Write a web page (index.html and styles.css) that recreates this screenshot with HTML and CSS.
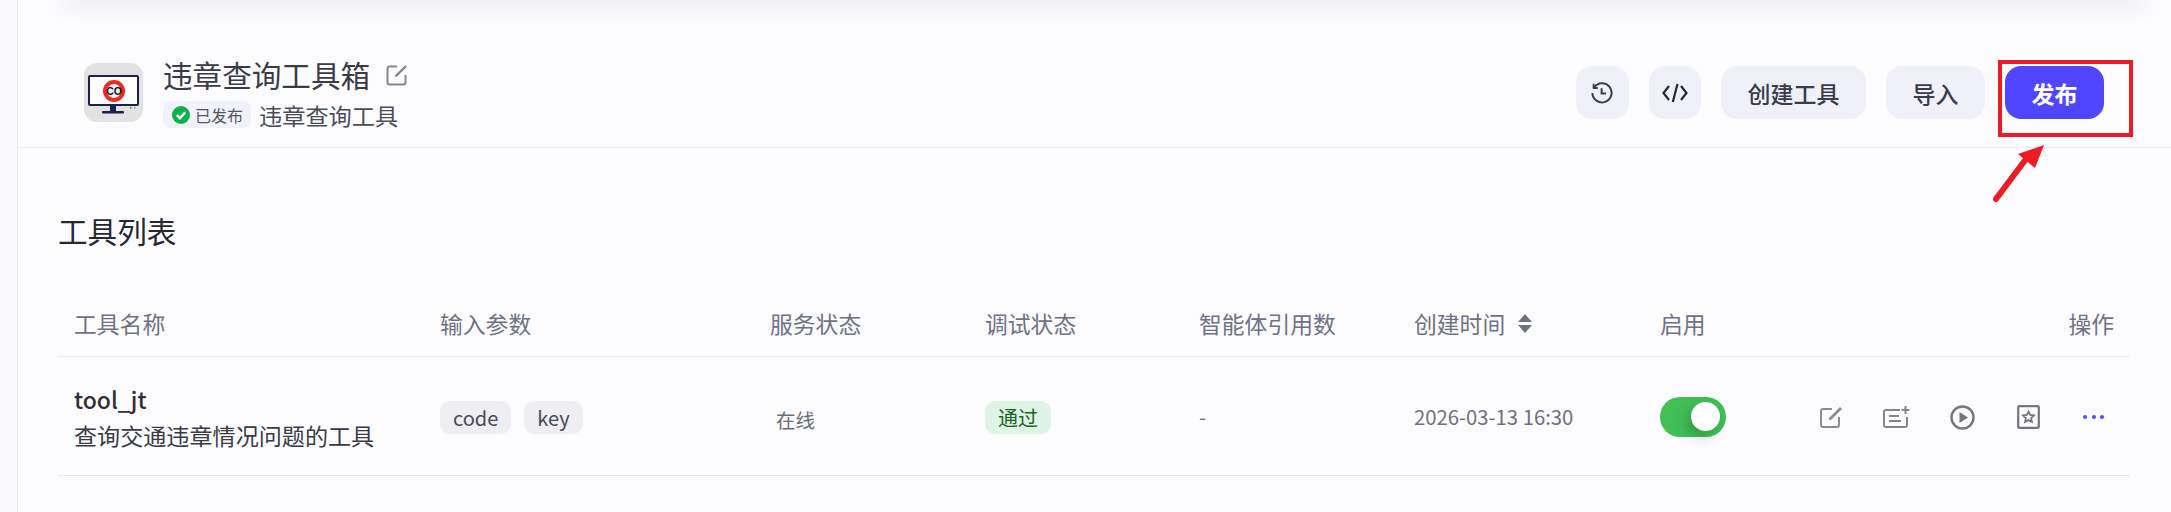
FILE: index.html
```html
<!DOCTYPE html>
<html lang="zh-CN">
<head>
  <meta charset="UTF-8" />
  <title>违章查询工具箱</title>
  <link rel="stylesheet" href="styles.css">
</head>
<body>
  <div class="app">
    <div class="side-edge"></div>
    <div class="main">
      <div class="top-card"></div>

      <div class="header">
        <div class="logo">
          <svg width="59" height="59" viewBox="0 0 59 59">
            <rect x="5" y="13" width="49" height="29" rx="1" fill="#fff" stroke="#1b2050" stroke-width="2"/>
            <rect x="26" y="42" width="6" height="6" fill="#1b2050"/>
            <rect x="18" y="48" width="22" height="2.4" rx="1" fill="#1b2050"/>
            <circle cx="30" cy="28" r="9" fill="#f4f4f4" stroke="#f0281e" stroke-width="4"/>
            <text x="30" y="32" class="logo-text" text-anchor="middle">CO</text>
            <rect x="46" y="44" width="1.4" height="1.4" fill="#555"/>
            <rect x="50" y="44" width="1.4" height="1.4" fill="#888"/>
          </svg>
        </div>
        <div class="info">
          <div class="title-row">
            <span class="title">违章查询工具箱</span>
            <svg class="title-edit" width="22" height="22" viewBox="0 0 22 22" fill="none" stroke="#85858c" stroke-width="2">
              <path d="M11 2.5H3.5a2 2 0 0 0-2 2v14a2 2 0 0 0 2 2h14a2 2 0 0 0 2-2V11"/>
              <path d="M9.5 12.5 20 2" stroke-width="2.4"/>
            </svg>
          </div>
          <div class="sub-row">
            <span class="badge">
              <svg width="18" height="18" viewBox="0 0 18 18">
                <circle cx="9" cy="9" r="9" fill="#0bb04a"/>
                <path d="M4.8 9.2 7.8 12.2 13.2 6.4" fill="none" stroke="#fff" stroke-width="2.4"/>
              </svg>
              已发布
            </span>
            <span class="sub-text">违章查询工具</span>
          </div>
        </div>
        <div class="actions">
          <button class="btn btn-icon">
            <svg width="22" height="22" viewBox="0 0 22 22" fill="none" stroke="#3a3d52" stroke-width="2">
              <path d="M3.2 5.2A9.6 9.6 0 1 1 1.4 11"/>
              <path d="M2.6 1.8V6h4.2" stroke-width="1.8"/>
              <path d="M10.6 6.2v5.2h4.4"/>
            </svg>
          </button>
          <button class="btn btn-icon">
            <svg width="26" height="20" viewBox="0 0 26 20" fill="none" stroke="#26283a" stroke-width="2.2">
              <path d="M7 3 1.5 10 7 17"/>
              <path d="M19 3 24.5 10 19 17"/>
              <path d="M15.5 1 10.8 19"/>
            </svg>
          </button>
          <button class="btn btn-wide">创建工具</button>
          <button class="btn btn-mid">导入</button>
          <button class="btn btn-mid btn-primary">发布</button>
        </div>
      </div>

      <div class="content">
        <h2 class="list-title">工具列表</h2>
        <table class="tools">
          <colgroup>
            <col class="c1"><col class="c2"><col class="c3"><col class="c4"><col class="c5"><col class="c6"><col class="c7"><col>
          </colgroup>
          <thead>
            <tr>
              <th>工具名称</th>
              <th>输入参数</th>
              <th>服务状态</th>
              <th>调试状态</th>
              <th>智能体引用数</th>
              <th>
                <span class="sort-head">创建时间
                  <svg width="16" height="21" viewBox="0 0 16 21" fill="#6f7285">
                    <path d="M8 1 15 9H1z"/>
                    <path d="M8 20 15 12H1z"/>
                  </svg>
                </span>
              </th>
              <th>启用</th>
              <th class="right">操作</th>
            </tr>
          </thead>
          <tbody>
            <tr>
              <td>
                <div class="tool-name">tool_jt</div>
                <div class="tool-desc">查询交通违章情况问题的工具</div>
              </td>
              <td>
                <div class="tags">
                  <span class="tag">code</span>
                  <span class="tag">key</span>
                </div>
              </td>
              <td><span class="online">在线</span></td>
              <td><span class="tag tag-ok">通过</span></td>
              <td class="muted">-</td>
              <td class="muted">2026-03-13 16:30</td>
              <td><span class="toggle"><span class="knob"></span></span></td>
              <td>
                <div class="ops">
                  <svg width="23" height="22" viewBox="0 0 23 22" fill="none" stroke="#8b8b92" stroke-width="2">
                    <path d="M12 3H3a2 2 0 0 0-2 2v14a2 2 0 0 0 2 2h14a2 2 0 0 0 2-2v-8"/>
                    <path d="M9.5 13.5 21 2" stroke-width="2.8"/>
                  </svg>
                  <svg width="27" height="22" viewBox="0 0 27 22" fill="none" stroke="#85858c" stroke-width="2">
                    <path d="M17 4H3a2 2 0 0 0-2 2v13a2 2 0 0 0 2 2h19a2 2 0 0 0 2-2v-8"/>
                    <path d="M6 10h10M6 15h12"/>
                    <path d="M22.5 0v8M18.5 4h8"/>
                  </svg>
                  <svg width="25" height="25" viewBox="0 0 25 25" fill="none" stroke="#75757c" stroke-width="2.4">
                    <circle cx="12.5" cy="12.5" r="11"/>
                    <path d="M9.5 7v11l8.5-5.5z" fill="#75757c" stroke="none"/>
                  </svg>
                  <svg class="op-star" width="23" height="24" viewBox="0 0 23 24" fill="none" stroke="#75757c" stroke-width="2.2">
                    <rect x="1.2" y="1.2" width="20.6" height="21.6" rx="1.5"/>
                    <path d="M11.5 6.5 13.2 10l3.8.5-2.8 2.6.7 3.8-3.4-1.8-3.4 1.8.7-3.8L6 10.5l3.8-.5z" stroke-width="1.8"/>
                  </svg>
                  <span class="more"><i></i><i></i><i></i></span>
                </div>
              </td>
            </tr>
          </tbody>
        </table>
      </div>
    </div>
  </div>

  <!-- red annotation drawn over the screenshot -->
  <div class="mark-box"></div>
  <svg class="mark-arrow" width="60" height="70" viewBox="0 0 60 70">
    <path d="M5 63 35 23" stroke="#ed1c24" stroke-width="6" stroke-linecap="round"/>
    <path d="M53 9 27 18 44 32z" fill="#ed1c24"/>
  </svg>
</body>
</html>
```

FILE: styles.css
```css
* { margin: 0; padding: 0; box-sizing: border-box; }
html, body { height: 100%; overflow: hidden; }
body {
  font-family: "Noto Sans CJK SC", "Noto Sans", sans-serif;
  background: #fcfcff;
  color: #33343f;
}
.app { display: flex; height: 512px; }
.side-edge {
  width: 18px;
  background: #f8f8fd;
  border-right: 1px solid #e8e8f0;
}
.main { flex: 1; overflow: hidden; }
.top-card {
  height: 0;
  margin: 0 30px 0 50px;
  box-shadow: 0 0 22px 6px rgba(0, 0, 0, 0.09);
}

/* header */
.header {
  display: flex;
  align-items: center;
  height: 148px;
  padding: 38px 67px 0 66px;
  border-bottom: 1px solid #e9e9f0;
}
.logo {
  width: 59px;
  height: 59px;
  background: #e2e2e2;
  border-radius: 13px;
  overflow: hidden;
}
.logo svg { display: block; }
.logo-text {
  font-family: "Liberation Sans", sans-serif;
  font-size: 10.5px;
  font-weight: bold;
  fill: #111;
}
.info { margin-left: 20px; }
.title-row { display: flex; align-items: center; height: 36px; }
.title { font-size: 29.6px; line-height: 36px; color: #3a3b47; }
.title-edit { margin-left: 16px; }
.sub-row { display: flex; align-items: center; margin-top: 8px; }
.badge {
  display: flex;
  align-items: center;
  gap: 5px;
  height: 27px;
  padding: 0 8px 0 9px;
  background: #f0f1f9;
  border-radius: 8px;
  font-size: 16px;
  color: #555766;
}
.sub-text { margin-left: 8px; font-size: 23.2px; line-height: 28px; color: #4b4c59; }
.actions { display: flex; gap: 20px; margin-left: auto; }
.btn {
  display: flex;
  align-items: center;
  justify-content: center;
  height: 53px;
  background: #f0f1f8;
  border: none;
  border-radius: 16px;
  font-family: inherit;
  font-size: 23px;
  font-weight: 500;
  color: #3a3c4c;
}
.btn-icon { width: 52.5px; }
.btn-wide { width: 145px; }
.btn-mid { width: 99px; }
.btn-primary { background: #5046ff; color: #fff; font-weight: 700; }

/* list */
.content { padding: 0 41px 0 40px; }
.list-title {
  margin-top: 63px;
  font-size: 29.6px;
  line-height: 40px;
  font-weight: 400;
  color: #26272f;
}
.tools {
  width: 100%;
  margin-top: 40px;
  border-collapse: collapse;
  table-layout: fixed;
}
.c1 { width: 365px; }
.c2 { width: 330px; }
.c3 { width: 215px; }
.c4 { width: 214px; }
.c5 { width: 215px; }
.c6 { width: 246px; }
.c7 { width: 117px; }
.tools th {
  height: 65px;
  padding: 0 0 0 17px;
  border-bottom: 1px solid #e9e9f0;
  text-align: left;
  font-size: 22.8px;
  font-weight: 400;
  color: #6f7285;
}
.tools th:first-child, .tools td:first-child { padding-left: 16px; }
.tools th.right { padding-right: 16px; text-align: right; }
.tools td {
  height: 119px;
  padding: 3px 0 0 17px;
  border-bottom: 1px solid #e6e6f0;
  vertical-align: middle;
  font-size: 20px;
}
.tools td:first-child { padding-top: 2px; }
.tools td.muted { padding-top: 1px; font-size: 20.3px; }
.sort-head { display: inline-flex; align-items: center; gap: 12px; }
.tool-name { font-size: 23px; line-height: 36px; font-weight: 500; color: #2f2f38; }
.tool-desc { font-size: 23.1px; line-height: 36px; color: #3a3b46; }
.tags { display: flex; gap: 13px; }
.tag {
  display: inline-block;
  height: 33px;
  padding: 0 13px;
  background: #eeeef3;
  border-radius: 10px;
  font-size: 20px;
  line-height: 33px;
  color: #4a4b57;
}
.tag-ok { padding: 0 13px; background: #e0f4e6; color: #17661f; }
.online { display: inline-block; margin: 5px 0 0 6px; font-size: 19.5px; line-height: 30px; color: #6b6c78; }
.muted { color: #6f707c; }
.toggle {
  display: block;
  width: 66px;
  height: 40px;
  padding: 5px 6px 5px 31px;
  background: #40bf55;
  border-radius: 20px;
}
.knob {
  display: block;
  width: 29px;
  height: 29px;
  background: #fff;
  border-radius: 50%;
  box-shadow: -4px 6px 14px rgba(0, 0, 0, 0.2);
}
.ops {
  display: flex;
  align-items: center;
  justify-content: flex-end;
  gap: 40px;
  padding: 0 26px 0 0;
}
.ops svg { flex-shrink: 0; }
.op-star { margin-left: 2px; }
.more { display: flex; gap: 4.5px; margin-left: 3px; }
.more i { width: 4px; height: 4px; background: #4f46ff; border-radius: 50%; }

/* annotation */
.mark-box {
  position: absolute;
  left: 1998px;
  top: 60px;
  width: 135px;
  height: 77px;
  border: 4px solid #ed1c24;
}
.mark-arrow {
  position: absolute;
  left: 1991px;
  top: 136px;
}
```
